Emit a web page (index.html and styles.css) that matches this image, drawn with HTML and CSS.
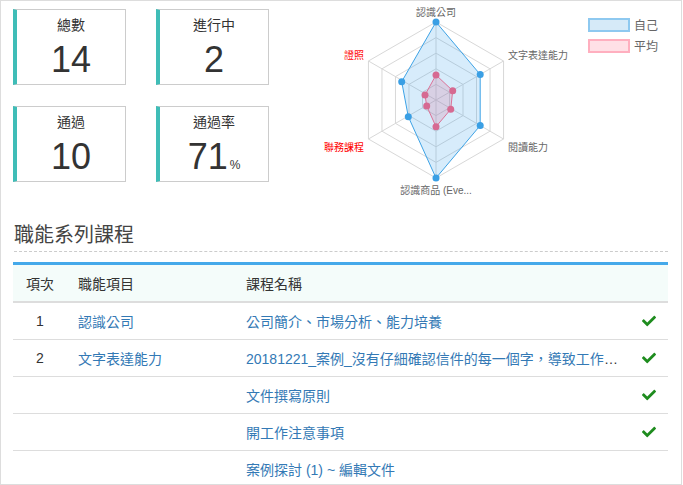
FILE: index.html
```html
<!doctype html>
<html>
<head>
    <meta http-equiv="Content-Type" content="text/html; charset=utf-8">
    <title>職能系列課程</title>
    <link rel="stylesheet" href="styles.css">
</head>
<body>
<div class="panel">

    <!-- 統計卡片 + 雷達圖 -->
    <div class="summary">
        <div class="cards">
            <div class="card">
                <div class="card-label">總數</div>
                <div class="card-num">14</div>
            </div>
            <div class="card">
                <div class="card-label">進行中</div>
                <div class="card-num">2</div>
            </div>
            <div class="card">
                <div class="card-label">通過</div>
                <div class="card-num">10</div>
            </div>
            <div class="card">
                <div class="card-label">通過率</div>
                <div class="card-num">71<small>%</small></div>
            </div>
        </div>

        <svg class="radar" width="390" height="200" viewBox="290 1 390 200">
            <g class="grid">
                <polygon points="436,22 503.55,61 503.55,139 436,178 368.45,139 368.45,61"/>
                <polygon points="436,37.6 490.04,68.8 490.04,131.2 436,162.4 381.96,131.2 381.96,68.8"/>
                <polygon points="436,53.2 476.53,76.6 476.53,123.4 436,146.8 395.47,123.4 395.47,76.6"/>
                <polygon points="436,68.8 463.02,84.4 463.02,115.6 436,131.2 408.98,115.6 408.98,84.4"/>
                <polygon points="436,84.4 449.51,92.2 449.51,107.8 436,115.6 422.49,107.8 422.49,92.2"/>
                <line x1="436" y1="100" x2="436" y2="22"/>
                <line x1="436" y1="100" x2="503.55" y2="61"/>
                <line x1="436" y1="100" x2="503.55" y2="139"/>
                <line x1="436" y1="100" x2="436" y2="178"/>
                <line x1="436" y1="100" x2="368.45" y2="139"/>
                <line x1="436" y1="100" x2="368.45" y2="61"/>
            </g>

            <!-- 自己 -->
            <polygon class="self-area" points="436,22 480.2,74.5 480.2,125.5 436,178 408.3,116.7 401.7,81.7"/>
            <g class="self-dot">
                <circle cx="436" cy="22" r="3.5"/>
                <circle cx="480.2" cy="74.5" r="3.5"/>
                <circle cx="480.2" cy="125.5" r="3.5"/>
                <circle cx="436" cy="178" r="3.5"/>
                <circle cx="408.3" cy="116.7" r="3.5"/>
                <circle cx="401.7" cy="81.7" r="3.5"/>
            </g>

            <!-- 平均 -->
            <polygon class="avg-area" points="436,75 452.7,90.7 450.7,109.3 436,126.7 426.7,106 425,95"/>
            <g class="avg-dot">
                <circle cx="436" cy="75" r="3.5"/>
                <circle cx="452.7" cy="90.7" r="3.5"/>
                <circle cx="450.7" cy="109.3" r="3.5"/>
                <circle cx="436" cy="126.7" r="3.5"/>
                <circle cx="426.7" cy="106" r="3.5"/>
                <circle cx="425" cy="95" r="3.5"/>
            </g>

            <g class="axis-label">
                <text x="436" y="16" text-anchor="middle">認識公司</text>
                <text x="508" y="59">文字表達能力</text>
                <text x="508" y="151">閱讀能力</text>
                <text x="436" y="194" text-anchor="middle">認識商品 (Eve...</text>
                <text class="warn" x="364" y="151" text-anchor="end">聯務課程</text>
                <text class="warn" x="364" y="59" text-anchor="end">證照</text>
            </g>

            <g class="legend">
                <rect class="lg-self" x="589" y="19" width="40" height="12"/>
                <text x="634" y="29.5">自己</text>
                <rect class="lg-avg" x="589" y="40" width="40" height="12"/>
                <text x="634" y="50.5">平均</text>
            </g>
        </svg>
    </div>

    <h3 class="title">職能系列課程</h3>

    <table class="course" cellpadding="0" cellspacing="0">
        <colgroup>
            <col class="c-no">
            <col class="c-item">
            <col class="c-name">
            <col class="c-ok">
        </colgroup>
        <thead>
            <tr>
                <th class="no">項次</th>
                <th>職能項目</th>
                <th>課程名稱</th>
                <th></th>
            </tr>
        </thead>
        <tbody>
            <tr>
                <td class="no">1</td>
                <td><a href="#">認識公司</a></td>
                <td><a href="#">公司簡介、市場分析、能力培養</a></td>
                <td class="ok"><svg width="14" height="14" viewBox="0 0 512 512"><path d="M173.9 439.4l-166.4-166.4c-10-10-10-26.2 0-36.2l36.2-36.2c10-10 26.2-10 36.2 0L192 312.7 432.1 72.6c10-10 26.2-10 36.2 0l36.2 36.2c10 10 10 26.2 0 36.2l-294.4 294.4c-10 10-26.2 10-36.2 0z"/></svg></td>
            </tr>
            <tr>
                <td class="no">2</td>
                <td><a href="#">文字表達能力</a></td>
                <td><a href="#">20181221_案例_沒有仔細確認信件的每一個字，導致工作上的失誤</a></td>
                <td class="ok"><svg width="14" height="14" viewBox="0 0 512 512"><path d="M173.9 439.4l-166.4-166.4c-10-10-10-26.2 0-36.2l36.2-36.2c10-10 26.2-10 36.2 0L192 312.7 432.1 72.6c10-10 26.2-10 36.2 0l36.2 36.2c10 10 10 26.2 0 36.2l-294.4 294.4c-10 10-26.2 10-36.2 0z"/></svg></td>
            </tr>
            <tr>
                <td class="no"></td>
                <td></td>
                <td><a href="#">文件撰寫原則</a></td>
                <td class="ok"><svg width="14" height="14" viewBox="0 0 512 512"><path d="M173.9 439.4l-166.4-166.4c-10-10-10-26.2 0-36.2l36.2-36.2c10-10 26.2-10 36.2 0L192 312.7 432.1 72.6c10-10 26.2-10 36.2 0l36.2 36.2c10 10 10 26.2 0 36.2l-294.4 294.4c-10 10-26.2 10-36.2 0z"/></svg></td>
            </tr>
            <tr>
                <td class="no"></td>
                <td></td>
                <td><a href="#">開工作注意事項</a></td>
                <td class="ok"><svg width="14" height="14" viewBox="0 0 512 512"><path d="M173.9 439.4l-166.4-166.4c-10-10-10-26.2 0-36.2l36.2-36.2c10-10 26.2-10 36.2 0L192 312.7 432.1 72.6c10-10 26.2-10 36.2 0l36.2 36.2c10 10 10 26.2 0 36.2l-294.4 294.4c-10 10-26.2 10-36.2 0z"/></svg></td>
            </tr>
            <tr>
                <td class="no"></td>
                <td></td>
                <td><a href="#">案例探討 (1) ~ 編輯文件</a></td>
                <td class="ok"></td>
            </tr>
        </tbody>
    </table>

</div>
</body>
</html>
```

FILE: styles.css
```css
html, body { margin: 0; padding: 0; background: #fff; }
body { font-family: "Liberation Sans", "Noto Sans CJK TC", sans-serif; font-size: 14px; color: #333; }

.panel { width: 682px; height: 485px; box-sizing: border-box; border: 1px solid #ddd; padding: 8px 13px 0 12px; overflow: hidden; }

/* 統計區 */
.summary { display: flex; align-items: flex-start; height: 173px; }
.cards { display: grid; grid-template-columns: 113px 113px; column-gap: 30px; row-gap: 21px; flex-shrink: 0; }
.card { height: 76px; box-sizing: border-box; border: 1px solid #ccc; border-left: 4px solid #3fbdb7; text-align: center; padding-top: 6px; }
.card-label { line-height: 18px; font-size: 14px; color: #333; }
.card-num { line-height: 40px; margin-top: 6px; font-size: 36px; color: #333; }
.card-num small { font-size: 12px; margin-left: 2px; }

.radar { display: block; flex-shrink: 0; margin: -8px 0 0 21px; overflow: visible; }
.radar .grid polygon, .radar .grid line { fill: none; stroke: #d8d8d8; stroke-width: 1; }
.self-area { fill: rgba(54, 162, 235, 0.2); stroke: #3ea3e6; stroke-width: 1; }
.self-dot circle { fill: #3a9fe4; }
.avg-area { fill: rgba(220, 100, 140, 0.2); stroke: #dc7298; stroke-width: 1; }
.avg-dot circle { fill: #d66a92; }
.axis-label text { font-size: 10px; fill: #666; }
.axis-label text.warn { fill: #f00; }
.legend text { font-size: 12px; fill: #666; }
.lg-self { fill: #d6eaf8; stroke: #8ec9f0; stroke-width: 2; }
.lg-avg { fill: #ffe0e6; stroke: #ffafbf; stroke-width: 2; }

/* 課程列表 */
.title { margin: 40px 0 0 1px; padding-bottom: 3px; font-size: 20px; line-height: 26px; font-weight: normal; color: #444; border-bottom: 1px dashed #ccc; }

.course { width: 655px; margin-top: 10px; table-layout: fixed; border-collapse: collapse; border-top: 3px solid #45a9ea; }
.course col.c-no { width: 54px; }
.course col.c-item { width: 168px; }
.course col.c-name { width: 407px; }
.course col.c-ok { width: 26px; }
.course th { height: 36px; padding: 0 11px; background: #f4fcfa; text-align: left; font-weight: normal; color: #333; border-bottom: 2px solid #ddd; }
.course td { height: 36px; padding: 0 11px; border-bottom: 1px solid #ddd; white-space: nowrap; overflow: hidden; text-overflow: ellipsis; color: #333; }
.course .no { text-align: center; padding: 0; }
.course a { color: #3379b5; text-decoration: none; }
.course td.ok { padding: 0; text-align: left; }
.course td.ok svg { display: block; margin-left: 0; fill: #1e8c1e; }
```
